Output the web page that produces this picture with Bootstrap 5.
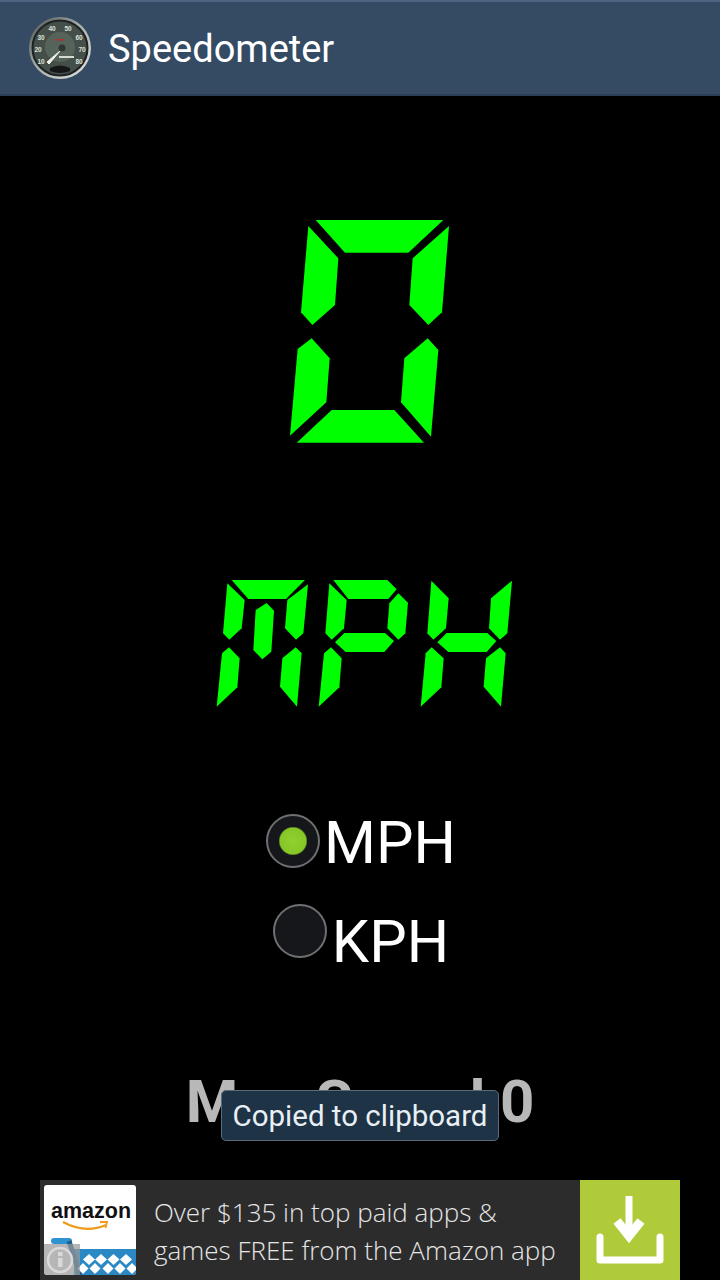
<!DOCTYPE html>
<html lang="en"><head><meta charset="utf-8"><title>Speedometer</title>
<link rel="stylesheet" href="https://cdn.jsdelivr.net/npm/bootstrap@5.3.0/dist/css/bootstrap.min.css">
<style>
html,body{background:#000;margin:0}
.screen{width:720px;height:1280px;position:relative;overflow:hidden;background:#000;font-family:Roboto,sans-serif}
.appbar{height:96px;background:#344b63;border-top:2px solid #4d6480;border-bottom:2px solid #2a3f55;padding-left:27px}
.app-title{color:#fff;font-size:38px;line-height:1;margin-left:15px;margin-top:1px}
.lcd polygon{fill:#0f0}
.digit{display:block;margin-top:104px;margin-left:270px}
.unit{display:block;margin-top:105px;margin-left:200px}
.choices{margin-top:94px;height:146px}
.opt{height:54px;color:#fff;font-size:59.5px;line-height:1;padding-left:2px}
.opt-two{margin-top:36px}
.form-check-input.dial,.form-check-input.dial:checked[type=radio]{width:54px;height:54px;margin:0;flex:none;background-color:#15171b;border:2px solid #6f7072;box-shadow:none;background-image:none}
.form-check-input.dial:checked[type=radio]{background-image:radial-gradient(circle at 50% 50%,#8fd12f 0,#86c728 13px,#15171b 14.5px)}
.opt-two .opt-label{margin-top:9px;margin-left:5px}
.opt-one .opt-label{margin-top:0;margin-left:4px}
.maxline{margin-top:107px;color:#b9b8b9;font-weight:700;font-size:60px;line-height:70px;text-align:center}
.copied{left:221px;top:1090px;width:278px;height:51px;background:#1f3346;border:1px solid #5b6b78;border-radius:5px;color:#e8f0f5;font-size:29.5px;line-height:51px;text-align:center;white-space:nowrap}
.adbar{left:40px;top:1180px;width:640px;height:100px;background:#2d2c2d}
.ad-logo{position:relative;width:92px;height:90px;margin:5px 0 0 4px;background:#fff;border-radius:3px;overflow:hidden;flex:none}
.ad-copy{color:#e6e6e6;font-family:"Open Sans",sans-serif;font-weight:300;font-size:26px;line-height:38px;margin-left:18px;white-space:nowrap;padding-top:13px}
.ad-btn{width:100px;height:100px;background:#b0cb3a;flex:none}
.gauge-num{font-family:"Liberation Sans",sans-serif;font-size:6.5px;font-weight:700;fill:#dfe2dc;text-anchor:middle}
</style></head><body>
<div class="screen">
  <header class="appbar d-flex align-items-center">
    <svg width="66" height="66" viewBox="0 0 66 66" role="img" aria-label="gauge">
      <defs><linearGradient id="rim" x1="0" y1="0" x2="1" y2="1"><stop offset="0" stop-color="#4a4f50"/><stop offset=".45" stop-color="#a5aaa7"/><stop offset="1" stop-color="#e4e7e3"/></linearGradient></defs>
      <circle cx="33" cy="33" r="31" fill="url(#rim)"/>
      <circle cx="33" cy="33" r="27.500" fill="#454f49" stroke="#1e2224" stroke-width="2"/>
      <circle cx="33" cy="32" r="15" fill="#55635a"/>
      <g>
        <text class="gauge-num" x="25" y="16">40</text><text class="gauge-num" x="41" y="16">50</text>
        <text class="gauge-num" x="14" y="25">30</text><text class="gauge-num" x="52" y="25">60</text>
        <text class="gauge-num" x="11" y="37">20</text><text class="gauge-num" x="55" y="37">70</text>
        <text class="gauge-num" x="14" y="49">10</text><text class="gauge-num" x="52" y="49">80</text>
      </g>
      <path d="M20 47 L33 36 L22 49 Z" fill="#f3f3ee" stroke="#f3f3ee"/>
      <circle cx="35" cy="33" r="3.500" fill="#2f3633"/>
      <path d="M32 41h15v2H32z" fill="#d6dad4"/>
      <path d="M23 53 q10-5 20 0 v3 q-10 4-20 0z" fill="#141617"/>
      <path d="M28 24h9v1.500h-9z" fill="#a33"/>
    </svg>
    <div class="app-title">Speedometer</div>
  </header>
  <main>
    <svg class="digit lcd" width="200" height="260" viewBox="0 0 600 780" role="img" aria-label="0">
      <polygon points="137,60 520,60 415,158 225,158"/>
      <polygon points="115,78 205,175 195,315 127,375 93,337"/>
      <polygon points="537,78 516,337 475,375 418,315 428,175"/>
      <polygon points="125,415 179,475 169,607 60,707 83,447"/>
      <polygon points="473,415 505,450 483,710 393,607 403,475"/>
      <polygon points="185,630 373,630 462,728 80,728"/>
    </svg>
    <svg class="unit lcd" width="330" height="155" viewBox="0 0 990 465" role="img" aria-label="MPH">
      <polygon points="95,45 315,45 258,102 145,102"/>
      <polygon points="82,55 134,105 125,190 88,224 69,205"/>
      <polygon points="324,58 310,205 288,224 255,190 262,105"/>
      <polygon points="200,114 222,137 214,260 187,283 160,255 167,135"/>
      <polygon points="87,247 119,280 112,367 50,425 66,265"/>
      <polygon points="287,247 305,265 291,425 240,365 247,280"/>
      <polygon points="400,45 562,45 590,73 565,102 445,102"/>
      <polygon points="388,55 440,105 432,190 395,224 376,205"/>
      <polygon points="595,85 624,113 616,205 595,224 562,190 568,115"/>
      <polygon points="405,232 433,204 555,204 582,228 553,261 437,261"/>
      <polygon points="393,247 425,280 418,367 356,425 372,265"/>
      <polygon points="694,47 746,100 738,190 700,224 682,205"/>
      <polygon points="936,47 922,205 900,224 867,190 873,100"/>
      <polygon points="712,232 740,204 862,204 889,228 860,261 745,261"/>
      <polygon points="695,247 731,280 724,367 662,425 677,265"/>
      <polygon points="900,247 917,265 903,425 851,365 858,280"/>
    </svg>
    <div class="choices">
      <div class="opt opt-one d-flex justify-content-center">
        <input class="form-check-input dial" type="radio" name="unit" checked aria-label="MPH">
        <span class="opt-label">MPH</span>
      </div>
      <div class="opt opt-two d-flex justify-content-center">
        <input class="form-check-input dial" type="radio" name="unit" aria-label="KPH">
        <span class="opt-label">KPH</span>
      </div>
    </div>
    <div class="maxline">Max Speed 0</div>
  </main>
  <div class="copied position-absolute">Copied to clipboard</div>
  <aside class="adbar position-absolute d-flex">
    <div class="ad-logo">
      <svg width="92" height="90" viewBox="0 0 92 90" role="img" aria-label="amazon">
        <text x="7" y="33" font-family="Liberation Sans, sans-serif" font-weight="700" font-size="21.500" fill="#111">amazon</text>
        <path d="M19 37 q22 12 43 3" fill="none" stroke="#f09a1c" stroke-width="2.2"/>
        <path d="M56 37 l7 0 -1.500 6" fill="none" stroke="#f09a1c" stroke-width="1.800"/>
        <path d="M10 56h15" stroke="#2f93d1" stroke-width="6" stroke-linecap="round"/>
        <rect x="30" y="64" width="62" height="26" fill="#2a88c5"/>
        <path d="M25 56 L36 90" stroke="#1c5f8e" stroke-width="5"/>
        <g fill="#fff"><path d="M45 69l6 5.500-6 5.500-6-5.500z"/><path d="M57 69l6 5.500-6 5.500-6-5.500z"/><path d="M69.500 69l6 5.500-6 5.500-6-5.500z"/><path d="M82 69l6 5.500-6 5.500-6-5.500z"/><path d="M39 78l5.500 5.500-5.500 5.500-5.500-5.500z"/><path d="M51 78l5.500 5.500-5.500 5.500-5.500-5.500z"/><path d="M64 78l5.500 5.500-5.500 5.500-5.500-5.500z"/><path d="M76 78l5.500 5.500-5.500 5.500-5.500-5.500z"/><path d="M88 78l5.500 5.500-5.500 5.500-5.500-5.500z"/></g>
        <rect x="0" y="59" width="36" height="31" fill="#9a9a9a" fill-opacity=".72"/>
        <circle cx="16" cy="75" r="12" fill="none" stroke="#d9d9d9" stroke-width="2.5"/>
        <rect x="14" y="73" width="4.500" height="9" fill="#d9d9d9"/><rect x="14" y="67" width="4.500" height="4" fill="#d9d9d9"/>
      </svg>
    </div>
    <div class="ad-copy flex-grow-1">Over $135 in top paid apps &amp;<br>games FREE from the Amazon app</div>
    <div class="ad-btn">
      <svg width="100" height="100" viewBox="0 0 100 100" role="img" aria-label="download">
        <path d="M49 16V58" fill="none" stroke="#fff" stroke-width="7"/>
        <path d="M37 41 L49 56 L61 41" fill="none" stroke="#fff" stroke-width="9"/>
        <path d="M20 57V80H80V57" fill="none" stroke="#fff" stroke-width="7" stroke-linejoin="round" stroke-linecap="round"/>
      </svg>
    </div>
  </aside>
</div>
<script src="https://cdn.jsdelivr.net/npm/bootstrap@5.3.0/dist/js/bootstrap.bundle.min.js"></script>
</body></html>
